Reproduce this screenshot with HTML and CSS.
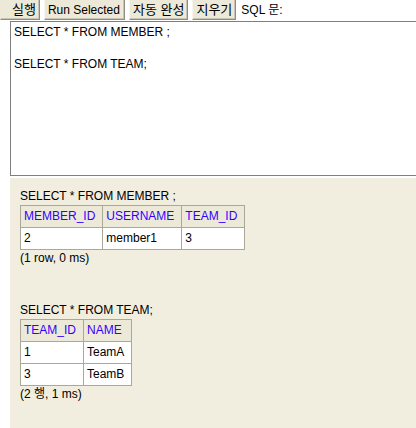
FILE: index.html
```html
<!DOCTYPE html>
<html>
<head>
<meta charset="utf-8">
<link rel="stylesheet" href="styles.css">
</head>
<body>
<div class="toolbar">
  <button class="btn ko first">실행</button>
  <button class="btn run">Run Selected</button>
  <button class="btn ko">자동 완성</button>
  <button class="btn ko">지우기</button>
  <span class="label">SQL 문:</span>
</div>
<div class="editor">SELECT * FROM MEMBER ;<br><br>SELECT * FROM TEAM;</div>
<div class="result">
  <div class="query">SELECT * FROM MEMBER ;</div>
  <table class="grid">
    <tr><th>MEMBER_ID</th><th>USERNAME</th><th>TEAM_ID</th></tr>
    <tr><td>2</td><td>member1</td><td>3</td></tr>
  </table>
  <div class="status">(1 row, 0 ms)</div>
  <div class="query second">SELECT * FROM TEAM;</div>
  <table class="grid">
    <tr><th>TEAM_ID</th><th>NAME</th></tr>
    <tr><td>1</td><td>TeamA</td></tr>
    <tr><td>3</td><td>TeamB</td></tr>
  </table>
  <div class="status">(2 행, 1 ms)</div>
</div>
</body>
</html>
```

FILE: styles.css
```css
html, body {
  margin: 0;
  padding: 0;
  background: #ffffff;
  overflow: hidden;
}
body {
  font-family: "Liberation Sans", Arial, "Noto Sans CJK KR", sans-serif;
  font-size: 12px;
  color: #000000;
  width: 416px;
  height: 428px;
}
.toolbar {
  display: flex;
  align-items: center;
  gap: 4px;
  height: 21px;
  margin-top: -1px;
}
.btn {
  font-family: "Liberation Sans", Arial, "Noto Sans CJK KR", sans-serif;
  font-size: 12px;
  line-height: 14px;
  height: 21px;
  padding: 0 3px;
  margin: 0;
  background: #ece9d8;
  color: #000000;
  border: 1px solid;
  border-color: #f6f5ef #8f8c80 #8f8c80 #f6f5ef;
  box-shadow: inset -1px -1px 0 #c9c5b4;
}
.btn.run {
  padding: 0 4px 0 3px;
}
.btn.ko {
  font-size: 13px;
  padding: 0 3px;
}
.btn.first {
  padding-left: 11px;
  border-left-color: #ece9d8;
}
.label {
  margin-left: 1px;
  line-height: 14px;
}
.editor {
  margin: 1px 0 0 10px;
  width: 400px;
  height: 149px;
  border: 1px solid #7f7f7f;
  border-right: none;
  padding: 2px 3px;
  line-height: 16px;
  background: #ffffff;
  white-space: nowrap;
}
.result {
  margin: 2px 0 0 10px;
  background: #f1eedf;
  height: 260px;
  padding: 11px 10px 0 10px;
}
.query {
  line-height: 14px;
  margin-bottom: 2px;
}
.query.second {
  margin-top: 38px;
}
.grid {
  border-collapse: collapse;
}
.grid th, .grid td {
  border: 1px solid #aca899;
  padding: 3px 7px 3px 3px;
  line-height: 15px;
  text-align: left;
  font-weight: normal;
}
.grid th {
  background: #ece9d8;
  color: #3300ff;
}
.grid td {
  background: #ffffff;
}
.status {
  line-height: 14px;
  margin-top: 1px;
}
```
